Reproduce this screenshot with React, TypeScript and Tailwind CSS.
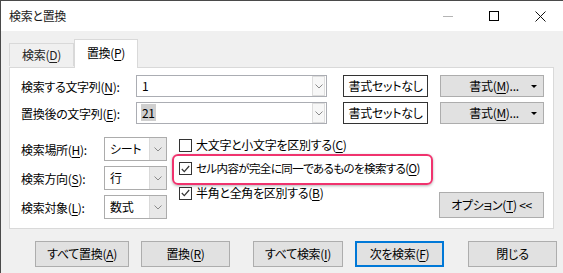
import type { ReactNode } from "react";

const Key = ({ k }: { k: string }) => (
  <span className="underline underline-offset-[2px]">{k}</span>
);

const Chevron = () => (
  <svg width="8" height="5" viewBox="0 0 8 5">
    <polyline points="0.5,0.5 4,4 7.5,0.5" fill="none" stroke="#8a8a8a" strokeWidth="1" />
  </svg>
);

const Btn = ({ children, className = "" }: { children: ReactNode; className?: string }) => (
  <div
    className={`flex h-[26px] items-center justify-center border border-[#adadad] bg-[#e1e1e1] ${className}`}
  >
    {children}
  </div>
);

const Combo = ({ value, selected }: { value: string; selected?: boolean }) => (
  <div className="flex h-[22px] w-[191px] items-center border border-[#abadb3] bg-white pl-[4px] pr-px">
    <span className="flex-1">
      <span className={selected ? "bg-[#cfcfcf] px-px" : "px-px"}>{value}</span>
    </span>
    <span className="flex h-[20px] w-[13px] items-center justify-center border border-[#dddddd] bg-[#f7f7f7]">
      <Chevron />
    </span>
  </div>
);

const Select = ({ value }: { value: string }) => (
  <div className="flex h-[24px] w-[63px] items-center border border-[#acacac] bg-white">
    <span className="flex-1 pl-[5px]">{value}</span>
    <span className="flex h-full w-[17px] items-center justify-center border-l border-[#d9d9d9] bg-[#e8e8e8]">
      <Chevron />
    </span>
  </div>
);

const Check = ({ checked }: { checked?: boolean }) => (
  <span className="flex h-[13px] w-[13px] shrink-0 items-center justify-center border border-[#333333] bg-white">
    {checked && (
      <svg width="9" height="8" viewBox="0 0 9 8">
        <polyline points="0.8,4 3.3,6.6 8.2,1" fill="none" stroke="#333333" strokeWidth="1.2" />
      </svg>
    )}
  </span>
);

const FieldLabel = ({ text, k }: { text: string; k: string }) => (
  <span>
    {text}(<Key k={k} />):
  </span>
);

const FormatBtn = () => (
  <Btn className="relative ml-[12px] h-[22px]! w-[104px]">
    <span className="pl-[4px]">
      書式(<Key k="M" />)...
    </span>
    <span className="absolute right-[6px] top-[9px] h-0 w-0 border-x-[3px] border-t-[3px] border-x-transparent border-t-black" />
  </Btn>
);

const NoFormat = () => (
  <div className="ml-[16px] flex h-[22px] w-[85px] items-center justify-center border border-[#333333] bg-white">
    書式セットなし
  </div>
);

export default function App() {
  return (
    <div className="flex h-[273px] w-[563px] flex-col overflow-hidden whitespace-nowrap border-l border-t border-[#4a4a4a] bg-[#f0f0f0] font-['Noto_Sans_CJK_JP',sans-serif] text-[12px] leading-none tracking-[-0.3px] text-black [font-feature-settings:'palt']">
      {/* title bar */}
      <div className="flex h-[30px] shrink-0 items-center bg-white pl-[8px]">
        <span className="text-[#1a1a1a]">検索と置換</span>
        <div className="ml-auto flex h-full">
          <div className="flex w-[46px] items-center justify-center">
            <span className="h-px w-[10px] bg-[#b4b4b4]" />
          </div>
          <div className="flex w-[46px] items-center justify-center">
            <span className="h-[10px] w-[10px] border border-black" />
          </div>
          <div className="flex w-[46px] items-center justify-center">
            <svg width="11" height="11" viewBox="0 0 11 11">
              <path d="M0.5 0.5 L10.5 10.5 M10.5 0.5 L0.5 10.5" stroke="#111" strokeWidth="1" />
            </svg>
          </div>
        </div>
      </div>

      {/* tabs */}
      <div className="flex h-[36px] shrink-0 items-end pl-[8px]">
        <div className="mb-px flex h-[23px] w-[65px] items-center justify-center border border-b-0 border-[#d9d9d9] text-[#222]">
          検索(<Key k="D" />)
        </div>
        <div className="relative z-10 -mb-px flex h-[29px] w-[64px] items-center justify-center border border-b-0 border-[#d9d9d9] bg-white pb-[2px]">
          置換(<Key k="P" />)
        </div>
      </div>

      {/* panel */}
      <div className="ml-[8px] w-[545px] border border-[#d9d9d9] bg-white pb-[9px] pl-[11px] pr-[9px] pt-[7px]">
        <div className="flex items-center">
          <div className="w-[115px] pt-px">
            <FieldLabel text="検索する文字列" k="N" />
          </div>
          <Combo value="1" />
          <NoFormat />
          <FormatBtn />
        </div>
        <div className="mt-[5px] flex items-center">
          <div className="w-[115px] pt-px">
            <FieldLabel text="置換後の文字列" k="E" />
          </div>
          <Combo value="21" selected />
          <NoFormat />
          <FormatBtn />
        </div>

        <div className="mt-[13px] flex">
          <div className="flex flex-col gap-[5px]">
            {[
              ["検索場所", "H", "シート"],
              ["検索方向", "S", "行"],
              ["検索対象", "L", "数式"],
            ].map(([t, k, v]) => (
              <div key={k} className="flex items-center">
                <div className="w-[83px] pt-px">
                  <FieldLabel text={t} k={k} />
                </div>
                <Select value={v} />
              </div>
            ))}
          </div>

          <div className="ml-[5px] flex flex-col">
            <div className="flex h-[16px] items-center gap-[4px] pl-[7px]">
              <Check />
              <span>
                大文字と小文字を区別する(<Key k="C" />)
              </span>
            </div>
            <div className="mt-px flex h-[31px] w-[261px] items-center gap-[4px] rounded-[6px] border-2 border-[#f0336e] pb-[2px] pl-[5px] shadow-[0_1px_3px_rgba(0,0,0,0.3)]">
              <Check checked />
              <span className="text-[11.5px] tracking-[-0.6px]">
                セル内容が完全に同一であるものを検索する(<Key k="O" />)
              </span>
            </div>
            <div className="flex h-[16px] items-center gap-[4px] pl-[7px]">
              <Check checked />
              <span>
                半角と全角を区別する(<Key k="B" />)
              </span>
            </div>
          </div>

          <Btn className="mb-px ml-auto w-[105px] self-end">
            オプション(<Key k="T" />) &lt;&lt;
          </Btn>
        </div>
      </div>

      {/* bottom buttons */}
      <div className="mt-[12px] flex pl-[34px]">
        <Btn className="w-[94px]">
          すべて置換(<Key k="A" />)
        </Btn>
        <Btn className="ml-[12px] w-[89px]">
          置換(<Key k="R" />)
        </Btn>
        <Btn className="ml-[23px] w-[90px]">
          すべて検索(<Key k="I" />)
        </Btn>
        <Btn className="ml-[12px] w-[89px] border-[#0078d7]! shadow-[inset_0_0_0_1px_#0078d7]">
          次を検索(<Key k="F" />)
        </Btn>
        <Btn className="ml-[24px] w-[89px]">閉じる</Btn>
      </div>
    </div>
  );
}
